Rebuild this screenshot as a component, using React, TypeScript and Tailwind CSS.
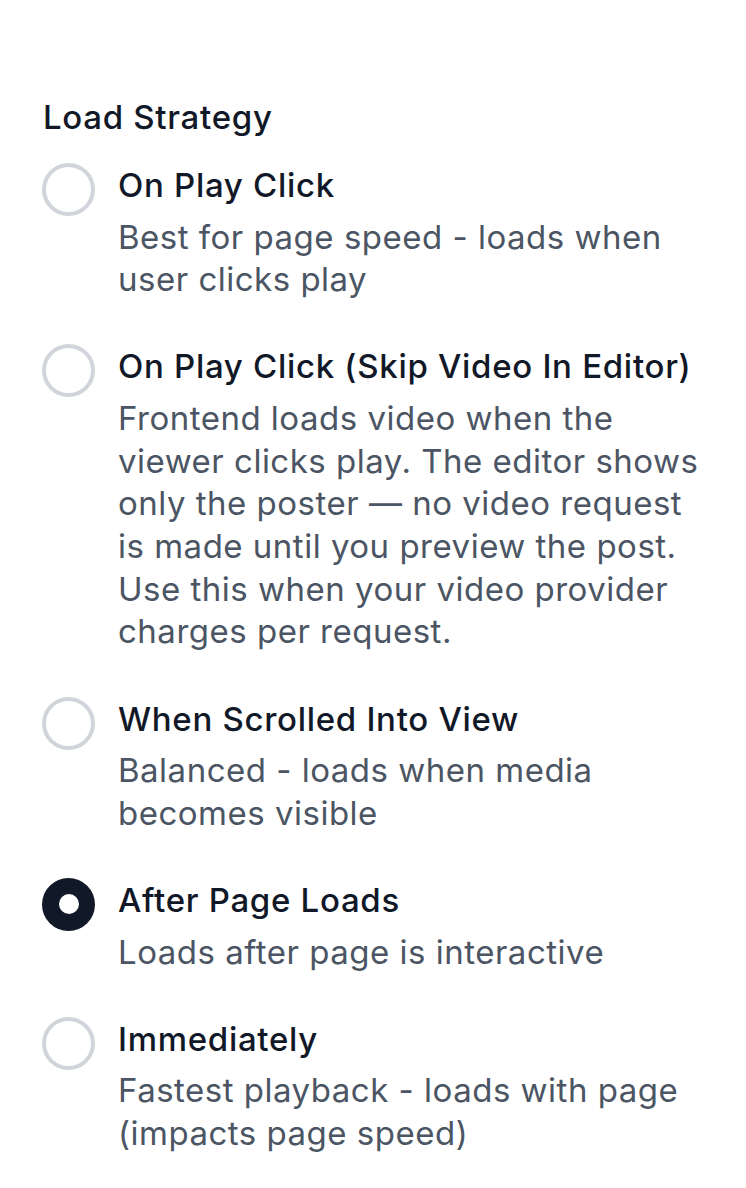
import { useState } from 'react';

const options = [
  {
    value: 'click',
    label: 'On Play Click',
    help: 'Best for page speed - loads when user clicks play',
  },
  {
    value: 'click-skip-editor',
    label: 'On Play Click (Skip Video In Editor)',
    help: 'Frontend loads video when the viewer clicks play. The editor shows only the poster — no video request is made until you preview the post. Use this when your video provider charges per request.',
  },
  {
    value: 'visible',
    label: 'When Scrolled Into View',
    help: 'Balanced - loads when media becomes visible',
  },
  {
    value: 'idle',
    label: 'After Page Loads',
    help: 'Loads after page is interactive',
  },
  {
    value: 'eager',
    label: 'Immediately',
    help: 'Fastest playback - loads with page (impacts page speed)',
  },
];

export default function App() {
  const [strategy, setStrategy] = useState('idle');

  return (
    <div className="min-h-screen bg-white font-['Inter',sans-serif] antialiased">
      <div className="px-[42px] pt-[97px]">
        <div className="ml-px text-[33px] leading-[40px] font-medium text-[#111827] tracking-[0.7px]">
          Load Strategy
        </div>

        <div role="radiogroup" className="mt-[28px] flex flex-col gap-[45.4px]">
          {options.map((opt) => {
            const checked = strategy === opt.value;
            return (
              <div
                key={opt.value}
                role="radio"
                aria-checked={checked}
                onClick={() => setStrategy(opt.value)}
                className="flex items-start gap-[23px] cursor-pointer"
              >
                {/* radio circle */}
                <span
                  className={
                    checked
                      ? 'mt-[-2px] flex h-[53px] w-[53px] shrink-0 items-center justify-center rounded-full bg-[#111827]'
                      : 'mt-[-2px] flex h-[53px] w-[53px] shrink-0 items-center justify-center rounded-full border-[4px] border-[#d1d5db] bg-white'
                  }
                >
                  {checked && <span className="h-[20px] w-[20px] rounded-full bg-white" />}
                </span>
                <div className="flex min-w-0 flex-1 flex-col">
                  <div className="text-[33px] leading-[40px] font-medium text-[#111827] tracking-[0.7px]">
                    {opt.label}
                  </div>
                  <div className="mt-[10.7px] text-[33px] leading-[42.67px] text-[#4b5563] tracking-[0.5px]">
                    {opt.help}
                  </div>
                </div>
              </div>
            );
          })}
        </div>
      </div>
    </div>
  );
}
